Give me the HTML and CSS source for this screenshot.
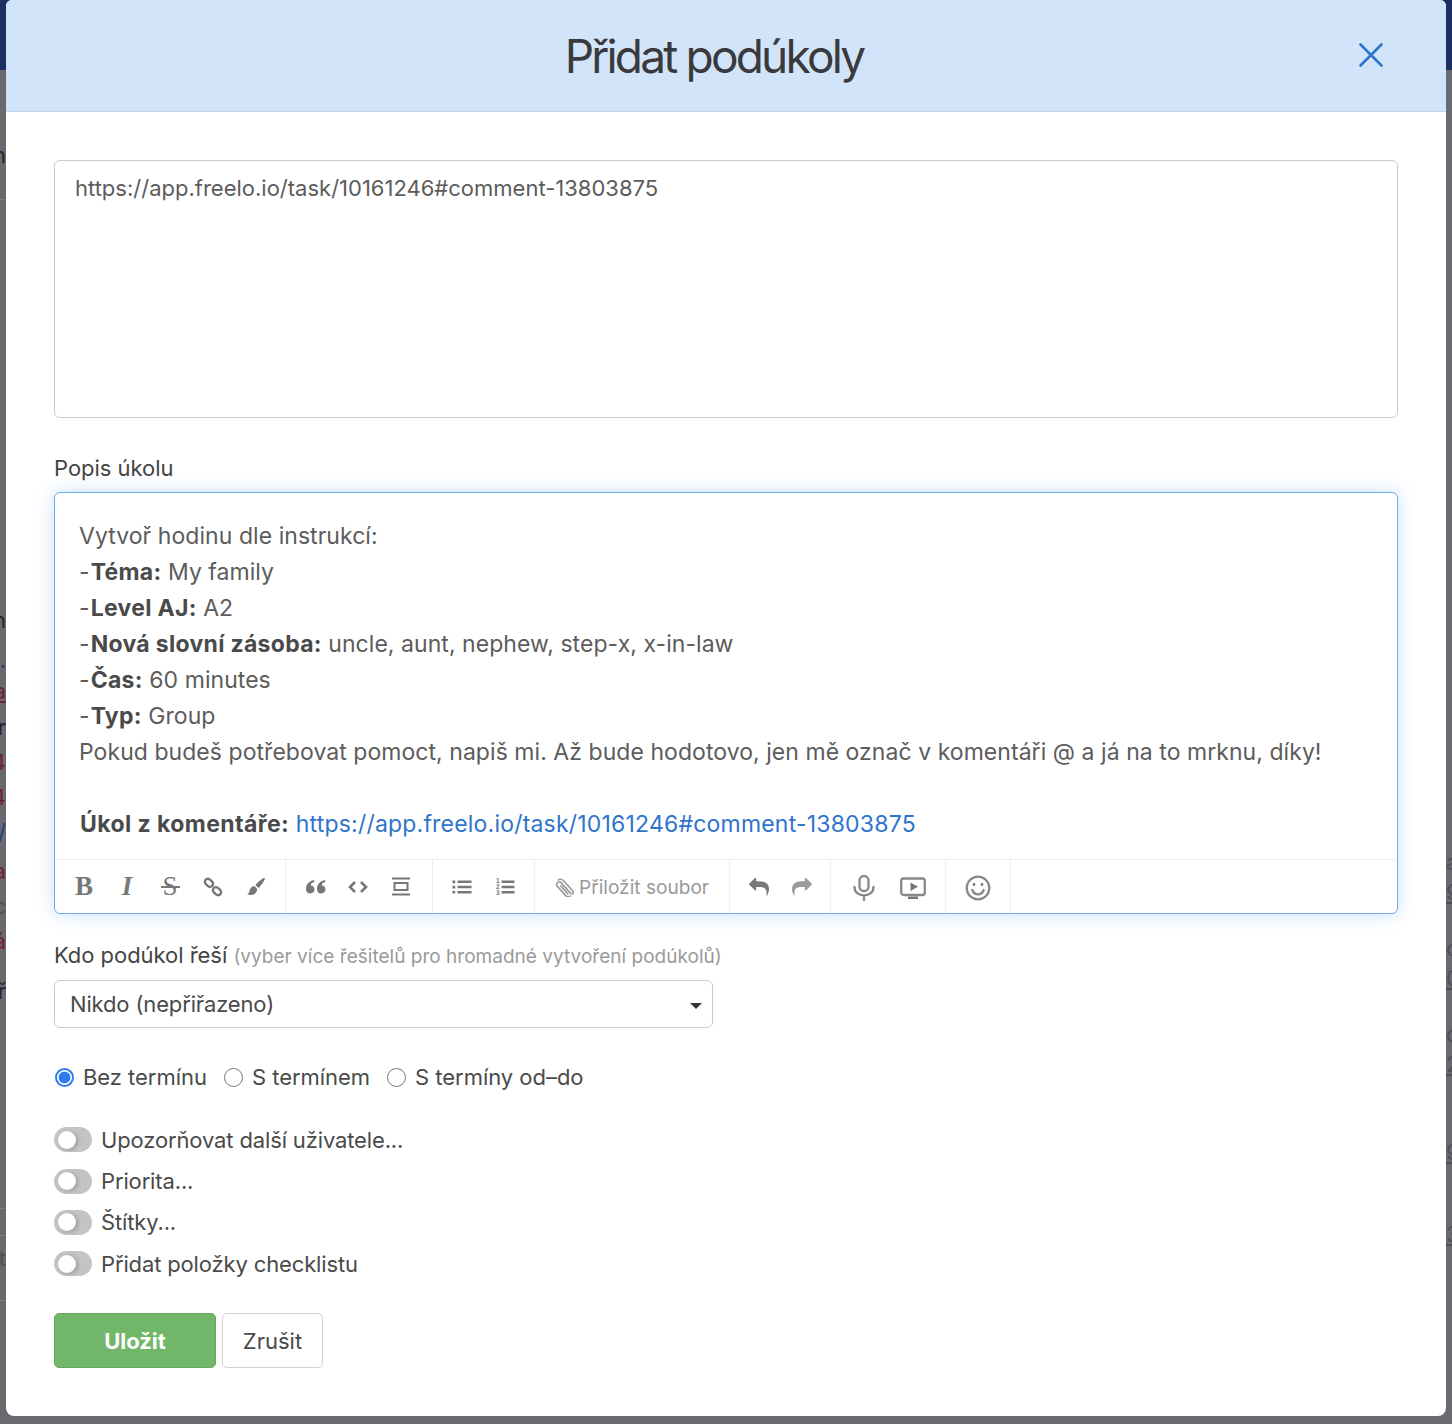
FILE: index.html
```html
<!DOCTYPE html>
<html lang="cs">
<head>
<meta charset="utf-8">
<title>Přidat podúkoly</title>
<link rel="stylesheet" href="styles.css">
</head>
<body>
<div class="backdrop">
  <div class="topbar"></div>
  <div class="strip strip-left">
    <i class="hair h1"></i><i class="hair h2"></i><i class="hair h3"></i><i class="hair h4"></i>
    <span class="bk dark s1">n</span>
    <span class="bk dark s2">n</span>
    <span class="bk blue s3">.</span>
    <span class="bk red under s4">a</span>
    <span class="bk dark s5">r</span>
    <span class="bk red s6">4</span>
    <span class="bk red s6">4</span>
    <span class="bk blue s6">/</span>
    <span class="bk red s7">a</span>
    <span class="bk grey s6">c</span>
    <span class="bk red s6">á</span>
    <span class="bk dark s8">ř</span>
    <span class="bk grey s9">t</span>
  </div>
  <div class="strip strip-right">
    <span class="bk grey r1">a</span>
    <span class="bk grey under r2">9</span>
    <span class="bk grey r3">c</span>
    <span class="bk grey under r2">0</span>
    <span class="bk grey r4">d</span>
    <span class="bk grey under r2">2</span>
    <span class="bk grey under r5">9</span>
    <span class="bk grey under r6">3</span>
  </div>
</div>

<main class="modal">
  <header class="modal-head">
    <h1 class="modal-title">Přidat podúkoly</h1>
    <svg class="close" viewBox="0 0 24 24" aria-label="Zavřít"><path d="M1.5 1.5l21 21M22.5 1.5l-21 21"/></svg>
  </header>

  <div class="modal-body">
    <div class="textbox">https://app.freelo.io/task/10161246#comment-13803875</div>

    <div class="label label-desc">Popis úkolu</div>

    <div class="editor">
      <div class="editor-text">
        <p>Vytvoř hodinu dle instrukcí:</p>
        <p>-<b>Téma:</b> My family</p>
        <p>-<b>Level AJ:</b> A2</p>
        <p>-<b>Nová slovní zásoba:</b> uncle, aunt, nephew, step-x, x-in-law</p>
        <p>-<b>Čas:</b> 60 minutes</p>
        <p>-<b>Typ:</b> Group</p>
        <p>Pokud budeš potřebovat pomoct, napiš mi. Až bude hodotovo, jen mě označ v komentáři @ a já na to mrknu, díky!</p>
        <p>&nbsp;</p>
        <p><b class="lead">Úkol z komentáře:</b> <a href="#">https://app.freelo.io/task/10161246#comment-13803875</a></p>
      </div>
      <div class="toolbar">
        <div class="group g1">
          <span class="tool glyph-b">B</span>
          <span class="tool glyph-i">I</span>
          <span class="tool glyph-s">S</span>
          <span class="tool"><svg class="ico" viewBox="0 0 20 20"><g class="line chain"><rect x="1.5" y="2.800" width="9" height="6" rx="3" transform="rotate(42 6 5.800)"/><rect x="9.500" y="11.200" width="9" height="6" rx="3" transform="rotate(42 14 14.200)"/></g></svg></span>
          <span class="tool"><svg class="ico" viewBox="0 0 20 20"><path class="fill" d="M17.600 1.100c.7-.5 1.600.4 1.200 1.200-1.300 2.700-3.900 6.700-6.400 8.700l-3-3c2.200-2.600 5.600-5.500 8.200-6.900zM8.300 9l2.900 2.900c-.1 2.700-1.800 5-4.600 5.800-1.900.5-4 .3-5.600-.7 1.300-.2 2.300-1.100 2.400-2.700.2-2.700 2.200-4.900 4.900-5.300z"/></svg></span>
        </div>
        <div class="group g2">
          <span class="tool"><svg class="ico wide-ico" viewBox="0 0 21 20"><path class="fill" d="M9 3c-4.500.8-8 4-8 9 0 2.500 1.500 4.500 4.200 4.500s4.300-2 4.300-4.200-1.800-3.900-3.700-3.900c.1-1.800 1.500-3 3.700-3.300zM20 3c-4.500.8-8 4-8 9 0 2.500 1.500 4.500 4.200 4.500s4.300-2 4.300-4.200-1.800-3.900-3.700-3.900c.1-1.800 1.500-3 3.700-3.300z"/></svg></span>
          <span class="tool"><svg class="ico" viewBox="0 0 20 20"><path class="line thick" d="M7 5l-5 5 5 5M13 5l5 5-5 5"/></svg></span>
          <span class="tool"><svg class="ico" viewBox="0 0 20 20"><g class="line"><path d="M1 1.500h18M1 17.500h18"/><rect x="3.500" y="6" width="13" height="7"/></g></svg></span>
        </div>
        <div class="group g3">
          <span class="tool"><svg class="ico" viewBox="0 0 20 20"><path class="fill" d="M.5 3.500h2.700v2.700H.5zM.5 8.700h2.700v2.700H.5zM.5 13.800h2.700v2.700H.5zM5.500 3.500h14v2.500h-14zM5.500 8.800h14v2.500h-14zM5.500 14h14v2.500h-14z"/></svg></span>
          <span class="tool"><svg class="ico" viewBox="0 0 20 20"><path class="fill" d="M6.500 3.500h13v2.500h-13zM6.500 8.800h13v2.500h-13zM6.500 14h13v2.500h-13z"/><text class="mini" x="1" y="6">1</text><text class="mini" x="1" y="12">2</text><text class="mini" x="1" y="18">3</text></svg></span>
        </div>
        <div class="group g4">
          <svg class="clip" viewBox="0 0 20 20"><path d="M17.500 17.200 7.300 5.900c-1-1.100-2.700-1.200-3.800-.2s-1.100 2.600-.1 3.700l8.300 9.200c1.600 1.700 3.900 1.300 5-.1"/><path d="M3.600 3.500c1.800-1.700 4.300-1.500 5.900.2l8.700 9.600c1.100 1.300 1.200 3 .1 4"/><path d="M6.300 8.400l8.100 9"/></svg>
          <span class="attach">Přiložit soubor</span>
        </div>
        <div class="group g5">
          <span class="tool"><svg class="ico" viewBox="0 0 1792 1792"><path class="fill" d="M1792 1120q0 166-127 451-3 7-10.500 24t-13.500 30-13 22q-12 17-28 17-15 0-23.500-10t-8.500-25q0-9 2.500-26.500t2.500-23.500q5-68 5-123 0-101-17.500-181t-48.500-138.500-80-101-105.500-69.500-133-42.500-154-21.500-175.500-6h-224v256q0 26-19 45t-45 19-45-19l-512-512q-19-19-19-45t19-45l512-512q19-19 45-19t45 19 19 45v256h224q713 0 875 403 53 134 53 333z"/></svg></span>
          <span class="tool faint"><svg class="ico flip" viewBox="0 0 1792 1792"><path class="fill" d="M1792 1120q0 166-127 451-3 7-10.500 24t-13.500 30-13 22q-12 17-28 17-15 0-23.500-10t-8.500-25q0-9 2.500-26.500t2.500-23.500q5-68 5-123 0-101-17.500-181t-48.500-138.500-80-101-105.500-69.500-133-42.500-154-21.500-175.500-6h-224v256q0 26-19 45t-45 19-45-19l-512-512q-19-19-19-45t19-45l512-512q19-19 45-19t45 19 19 45v256h224q713 0 875 403 53 134 53 333z"/></svg></span>
        </div>
        <div class="group g6">
          <span class="tool wide"><svg class="ico big" viewBox="0 0 26 26"><g class="soft"><rect x="8.500" y="1" width="9" height="15" rx="4.500"/><path d="M3.500 12c0 5.300 4.200 8.400 9.500 8.400s9.500-3.100 9.500-8.400M13 20.500v4.500"/></g></svg></span>
          <span class="tool wide"><svg class="ico big" viewBox="0 0 26 26"><g class="soft"><rect x="1.200" y="3.500" width="23.600" height="16.500" rx="2.500"/></g><path class="fill" d="M10.500 7.500l7.500 4.200-7.500 4.200zM8 21.500h10v2.500H8z"/></svg></span>
        </div>
        <div class="group g7">
          <svg class="ico big" viewBox="0 0 26 26"><g class="soft"><circle cx="13" cy="13" r="11.300"/><path d="M7.300 15c1 2.800 3.200 4.300 5.700 4.300s4.700-1.500 5.700-4.300"/></g><circle class="fill" cx="9" cy="9.500" r="1.400"/><circle class="fill" cx="17" cy="9.500" r="1.400"/></svg>
        </div>
      </div>
    </div>

    <div class="label label-assign">Kdo podúkol řeší <span class="hint">(vyber více řešitelů pro hromadné vytvoření podúkolů)</span></div>
    <div class="select"><span>Nikdo (nepřiřazeno)</span><i class="caret"></i></div>

    <div class="radios">
      <label class="radio"><input type="radio" name="term" checked>Bez termínu</label>
      <label class="radio"><input type="radio" name="term">S termínem</label>
      <label class="radio"><input type="radio" name="term">S termíny od–do</label>
    </div>

    <div class="toggles">
      <div class="toggle-row"><i class="toggle"></i>Upozorňovat další uživatele...</div>
      <div class="toggle-row"><i class="toggle"></i>Priorita...</div>
      <div class="toggle-row"><i class="toggle"></i>Štítky...</div>
      <div class="toggle-row"><i class="toggle"></i>Přidat položky checklistu</div>
    </div>

    <div class="actions">
      <button class="btn btn-save" type="button">Uložit</button>
      <button class="btn btn-cancel" type="button">Zrušit</button>
    </div>
  </div>
</main>
</body>
</html>
```
FILE: styles.css
```css
* { box-sizing: border-box; }
html, body { margin: 0; height: 100%; }
body {
  position: relative;
  height: 1424px;
  overflow: hidden;
  background: #69696f;
  font-family: Inter, "Noto Sans", sans-serif;
  font-size: 22px;
  color: #4a4a4a;
}

/* dimmed page behind the modal */
.backdrop { position: absolute; inset: 0; }
.topbar { height: 70px; background: #1c2f63; }
.strip {
  position: absolute;
  top: 70px;
  width: 6px;
  height: 1354px;
  overflow: hidden;
  display: flex;
  flex-direction: column;
  font-size: 22px;
  line-height: 26px;
}
.strip-left { left: 0; align-items: flex-end; }
.strip-right { right: 0; align-items: flex-start; }
.bk { display: block; flex: none; height: 26px; }
.dark { color: #26262b; }
.grey { color: #3f3f44; opacity: .6; }
.red { color: #6e2233; }
.blue { color: #1f3f7c; }
.under { text-decoration: underline; }
.hair { position: absolute; left: 0; width: 6px; height: 1px; background: #7c7c82; }
.h1 { top: 129px; }
.h2 { top: 1138px; }
.h3 { top: 1165px; }
.h4 { top: 1230px; }
.s1 { margin-top: 72px; }
.s2 { margin-top: 439px; }
.s3 { margin-top: 14px; }
.s4 { margin-top: 5px; }
.s5 { margin-top: 10px; }
.s6 { margin-top: 9px; }
.s7 { margin-top: 13px; }
.s8 { margin-top: 24px; }
.s9 { margin-top: 241px; }
.r1 { margin-top: 779px; }
.r2 { margin-top: 4px; }
.r3 { margin-top: 30px; }
.r4 { margin-top: 30px; }
.r5 { margin-top: 62px; }
.r6 { margin-top: 56px; }

/* modal */
.modal {
  position: absolute;
  left: 6px;
  top: 0;
  width: 1440px;
  height: 1416px;
  background: #fff;
  border-radius: 6px 6px 8px 8px;
}
.modal-head {
  position: relative;
  height: 112px;
  background: #d2e4f9;
  border-bottom: 1px solid #bfd2e6;
  border-radius: 6px 6px 0 0;
  display: flex;
  align-items: center;
  justify-content: center;
}
.modal-title {
  margin: 0 0 0 -24px;
  font-size: 46px;
  font-weight: 400;
  line-height: 56px;
  letter-spacing: -2.8px;
  color: #3a3a3c;
}
.close {
  position: absolute;
  left: 1353px;
  top: 43px;
  width: 24px;
  height: 24px;
  fill: none;
  stroke: #2f74cc;
  stroke-width: 2.6;
  stroke-linecap: round;
}
.modal-body { padding: 48px 48px 0; }

.textbox {
  height: 258px;
  padding: 12px 20px;
  border: 1px solid #c9c9c9;
  border-radius: 6px;
  line-height: 30px;
  color: #5c5c5c;
}
.label { line-height: 28px; color: #444; letter-spacing: -.04px; }
.label-desc { margin-top: 36px; height: 38px; }
.label-assign { margin-top: 27px; height: 39px; }
.hint { font-size: 19px; color: #9a9a9a; letter-spacing: .02px; }

.editor {
  height: 422px;
  border: 1px solid #6fa8e8;
  border-radius: 6px;
  box-shadow: 0 0 18px rgba(90, 160, 240, .32);
  display: flex;
  flex-direction: column;
}
.editor-text {
  height: 366px;
  padding: 25px 24px 0;
  font-size: 23px;
  letter-spacing: .05px;
  line-height: 36px;
  color: #5c5c5c;
}
.editor-text p { margin: 0; }
.editor-text b { font-weight: 700; color: #4a4a4a; letter-spacing: .3px; margin-left: 1px; }
.editor-text .lead { letter-spacing: .42px; }
.editor-text a { color: #2f74cc; text-decoration: none; letter-spacing: .2px; }

.toolbar { display: flex; height: 54px; border-top: 1px solid #eee; }
.group {
  display: flex;
  align-items: center;
  height: 100%;
  padding: 0 7.5px;
  border-right: 1px solid #eee;
  flex: none;
}
.g1 { width: 231px; }
.g2 { width: 147px; }
.g3 { width: 102px; }
.g4 { width: 195px; padding: 0 0 0 19px; }
.g5 { width: 101px; }
.g6 { width: 115px; padding: 0 0 0 8px; }
.g7 { width: 65px; padding: 0 0 0 19px; }

.tool {
  width: 43px;
  flex: none;
  display: flex;
  align-items: center;
  justify-content: center;
  color: #777;
}
.wide { width: 49px; }
.glyph-b, .glyph-i, .glyph-s { font-family: "Liberation Serif", serif; font-size: 27px; line-height: 27px; }
.glyph-b { font-weight: 700; }
.glyph-i { font-style: italic; font-weight: 700; }
.glyph-s { position: relative; }
.glyph-s::after {
  content: "";
  position: absolute;
  left: 12px;
  right: 12px;
  top: 13px;
  height: 2px;
  background: #777;
}
.ico { width: 20px; height: 20px; display: block; }
.wide-ico { width: 21px; }
.big { width: 26px; height: 26px; margin-top: 3px; }
.flip { transform: scaleX(-1); }
.faint { opacity: .72; }
.fill { fill: #777; }
.line { fill: none; stroke: #777; stroke-width: 2; }
.chain { stroke-width: 2.4; }
.thick { stroke-width: 2.6; }
.soft { fill: none; stroke: #888; stroke-width: 2.3; stroke-linecap: round; }
.mini { font-family: "Liberation Sans", sans-serif; font-size: 6.5px; font-weight: 700; fill: #777; }
.clip { width: 20px; height: 20px; fill: none; stroke: #999; stroke-width: 1.6; flex: none; }
.attach { margin-left: 5px; font-size: 19.1px; color: #999; white-space: nowrap; }

.select {
  width: 659px;
  height: 48px;
  padding: 0 10px 0 15px;
  border: 1px solid #c9c9c9;
  border-radius: 6px;
  display: flex;
  align-items: center;
  justify-content: space-between;
  color: #4a4a4a;
  letter-spacing: -.15px;
}
.caret {
  width: 0;
  height: 0;
  border-left: 6px solid transparent;
  border-right: 6px solid transparent;
  border-top: 6px solid #333;
  margin-top: 3px;
}

.radios { display: flex; gap: 16px; margin-top: 35px; height: 28px; align-items: center; letter-spacing: -.03px; }
.radio { display: flex; align-items: center; color: #4a4a4a; }
.radio input {
  appearance: none;
  width: 19px;
  height: 19px;
  margin: 0 9px 0 1px;
  border: 1.5px solid #777;
  border-radius: 50%;
  background: #fff;
  flex: none;
}
.radio input:checked {
  border: 2px solid #2f7bf0;
  background: radial-gradient(circle, #2f7bf0 0 5.5px, #fff 6.2px);
}

.toggles { margin-top: 28px; display: flex; flex-direction: column; }
.toggle-row { display: flex; align-items: center; height: 41.4px; color: #4a4a4a; letter-spacing: -.14px; }
.toggle {
  position: relative;
  width: 38px;
  height: 25px;
  margin-right: 9px;
  border-radius: 13px;
  background: #c4c4c4;
  flex: none;
}
.toggle::after {
  content: "";
  position: absolute;
  left: 4px;
  top: 3.5px;
  width: 18px;
  height: 18px;
  border-radius: 50%;
  background: #fff;
  box-shadow: 2px 1px 4px rgba(0, 0, 0, .22);
}

.actions { display: flex; gap: 6px; margin-top: 28px; }
.btn {
  height: 55px;
  border-radius: 5px;
  font-family: inherit;
  font-size: 22px;
  padding: 2px 0 0;
}
.btn-save {
  width: 162px;
  background: #72b669;
  border: 1px solid #65a85d;
  color: #fff;
  font-weight: 700;
}
.btn-cancel {
  width: 101px;
  background: #fff;
  border: 1px solid #d0d0d0;
  color: #4a4a4a;
}
```
